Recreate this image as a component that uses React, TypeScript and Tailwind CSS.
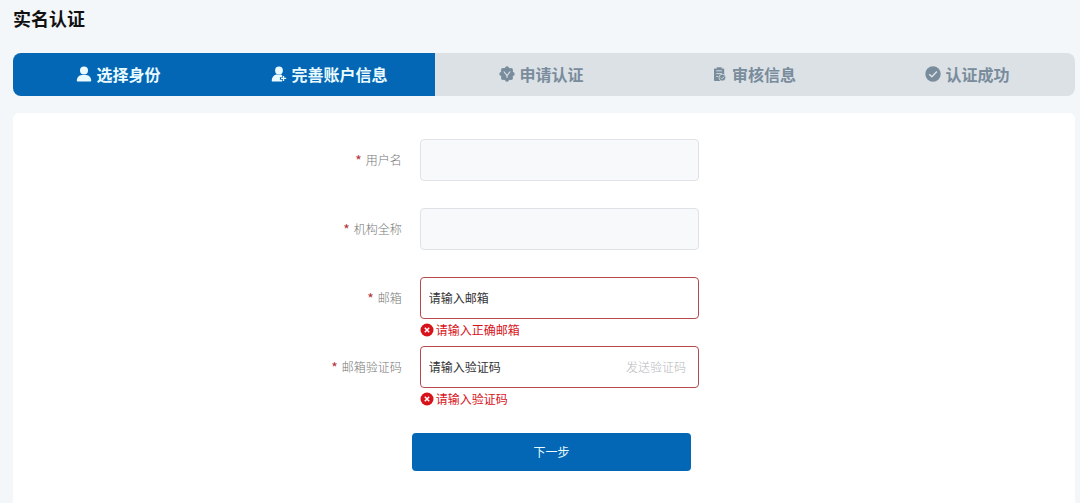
import React from "react";

const UserIcon = () => (
  <svg viewBox="0 0 16 16" className="h-4 w-4 shrink-0" fill="currentColor" aria-hidden="true">
    <circle cx="8" cy="4.6" r="4" />
    <path d="M1.4 15.4c-.4 0-.6-.3-.6-.7 0-3.4 2.2-5.4 5-5.8h4.4c2.8.4 5 2.4 5 5.8 0 .4-.2.7-.6.7z" />
  </svg>
);

const UserPlusIcon = () => (
  <svg viewBox="0 0 16 16" className="h-4 w-4 shrink-0" fill="currentColor" aria-hidden="true">
    <circle cx="8" cy="4.4" r="3.9" />
    <path d="M5.2 8.6h5c.5.3.8.6 1 1v1.6H8.9v2.6h2.3v1.6H1.3c-.4 0-.6-.3-.6-.6 0-3.2 1.8-5.6 4.5-6.2z" />
    <path d="M11.9 9.9h1.3v1.9h2v1.3h-2V15h-1.3v-1.9h-1.9v-1.3h1.9z" />
  </svg>
);

const BadgeIcon = () => (
  <svg viewBox="0 0 16 16" className="h-4 w-4 shrink-0" aria-hidden="true">
    <g fill="currentColor">
      <circle cx="8" cy="8" r="6.4" />
      <circle cx="8" cy="2.3" r="2" />
      <circle cx="12" cy="4" r="2" />
      <circle cx="13.7" cy="8" r="2" />
      <circle cx="12" cy="12" r="2" />
      <circle cx="8" cy="13.7" r="2" />
      <circle cx="4" cy="12" r="2" />
      <circle cx="2.3" cy="8" r="2" />
      <circle cx="4" cy="4" r="2" />
    </g>
    <path d="M4.8 5.5L8 9.5l3.2-4M8 9v2.8" fill="none" stroke="#dce1e6" strokeWidth="1.2" />
  </svg>
);

const ReviewIcon = () => (
  <svg viewBox="0 0 16 16" className="h-4 w-4 shrink-0" aria-hidden="true">
    <path
      fill="currentColor"
      d="M4.8 1.2h4.8v1.2h1.9c.4 0 .7.3.7.7v11.1c0 .4-.3.7-.7.7H2.7c-.4 0-.7-.3-.7-.7V3.1c0-.4.3-.7.7-.7h2.100z"
    />
    <path
      d="M4.2 4.8h5.8M4.2 7.6h5.8M4.2 10.4h2.2"
      fill="none"
      stroke="#dce1e6"
      strokeWidth=".9"
    />
    <circle cx="10.4" cy="11.6" r="3.4" fill="currentColor" stroke="#dce1e6" strokeWidth=".8" />
    <path d="M8.9 11.6l1.2 1.2 2-2.2" fill="none" stroke="#dce1e6" strokeWidth=".9" />
  </svg>
);

const SuccessIcon = () => (
  <svg viewBox="0 0 16 16" className="h-4 w-4 shrink-0" aria-hidden="true">
    <circle cx="8" cy="8" r="7.7" fill="currentColor" />
    <path d="M4.2 8.2l2.7 2.6 5-5.2" fill="none" stroke="#dce1e6" strokeWidth="1.5" />
  </svg>
);

const ErrorIcon = () => (
  <svg viewBox="0 0 14 14" className="h-3.5 w-3.5 shrink-0" aria-hidden="true">
    <circle cx="7" cy="7" r="6.5" fill="#d8121b" />
    <path d="M4.8 4.8l4.4 4.4M9.2 4.8L4.8 9.2" stroke="#fff" strokeWidth="1.5" />
  </svg>
);

const steps = [
  { title: "选择身份", Icon: UserIcon, active: true },
  { title: "完善账户信息", Icon: UserPlusIcon, active: true },
  { title: "申请认证", Icon: BadgeIcon, active: false },
  { title: "审核信息", Icon: ReviewIcon, active: false },
  { title: "认证成功", Icon: SuccessIcon, active: false },
];

const fields = [
  { id: "username", label: "用户名", disabled: true },
  { id: "organization", label: "机构全称", disabled: true },
  { id: "email", label: "邮箱", placeholder: "请输入邮箱", error: "请输入正确邮箱" },
  {
    id: "code",
    label: "邮箱验证码",
    placeholder: "请输入验证码",
    error: "请输入验证码",
    action: "发送验证码",
  },
];

const App: React.FC = () => {
  return (
    <main className="flex min-h-screen flex-col bg-[#f4f7f9] pr-[5px] pl-[13px] font-['Noto_Sans_CJK_SC',sans-serif]">
      <h1 className="pt-1.5 text-lg leading-6 font-bold text-[#111]">实名认证</h1>

      <ol className="mt-[23px] grid grid-cols-[211fr_211fr_213fr_212fr_215fr] overflow-hidden rounded-lg">
        {steps.map(({ title, Icon, active }) => (
          <li
            key={title}
            className={`flex h-[43px] items-center justify-center gap-1 pb-0.5 text-base font-bold ${
              active ? "bg-[#0367b5] text-[#e9fbff]" : "bg-[#dce1e6] text-[#798c9c]"
            }`}
          >
            <Icon />
            {title}
          </li>
        ))}
      </ol>

      <form
        className="mt-[17px] flex-1 rounded-t-md bg-white pt-[26px] pb-8 text-xs"
        onSubmit={(e) => e.preventDefault()}
      >
        {fields.map((field) => (
          <div key={field.id} className="flex gap-[18px]">
            <label
              htmlFor={field.id}
              className="flex h-[42px] w-[36.6%] items-center justify-end gap-1 font-light text-[#777]"
            >
              <span className="text-sm font-normal text-[#b5323a]">*</span>
              {field.label}
            </label>
            <div className="min-h-[69px] w-[26.3%]">
              <div
                className={`flex h-[42px] items-center rounded border ${
                  field.disabled ? "border-[#dfe3e8] bg-[#f7f9fb]" : "border-[#b9484d] bg-white"
                }`}
              >
                <input
                  id={field.id}
                  type="text"
                  disabled={field.disabled}
                  placeholder={field.placeholder}
                  className="h-full min-w-0 flex-1 bg-transparent px-2 pb-0.5 text-[#333] outline-none placeholder:text-[#333]"
                />
                {field.action && (
                  <button type="button" className="mr-3 shrink-0 font-light text-[#b4b7ba]">
                    {field.action}
                  </button>
                )}
              </div>
              {field.error && (
                <p className="flex h-[22px] items-center gap-0.5 text-[#d8121b]">
                  <ErrorIcon />
                  {field.error}
                </p>
              )}
            </div>
          </div>
        ))}

        <button
          type="submit"
          className="mt-[18px] ml-[37.6%] block h-[38px] w-[26.2%] rounded-sm bg-[#0367b5] text-[#e9fbff]"
        >
          下一步
        </button>
      </form>
    </main>
  );
};

export default App;
